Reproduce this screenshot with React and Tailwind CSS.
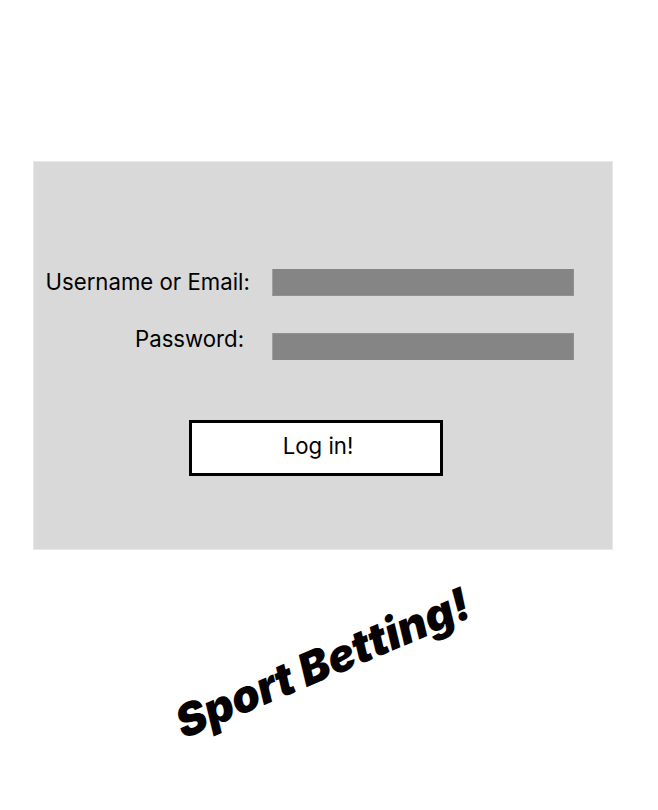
export default function App() {
  return (
    <main className="h-[810px] w-[658px] overflow-hidden bg-white pt-[161px] font-['Inter',sans-serif] text-black">
      <form className="ml-[33px] h-[389px] w-[580px] border border-[#e8e8e8] bg-[#d9d9d9] pt-[107px]">
        <div className="flex h-[27px]">
          <label className="-mt-px ml-[11.5px] w-[226.5px] whitespace-nowrap text-[22.2px] leading-[27px]">Username or Email:</label>
          <div className="h-[27px] w-[302px] border-r border-b border-l border-r-[#909090] border-b-[#909090] border-l-[#a0a0a0] bg-[#858585]" />
        </div>
        <div className="mt-[29px] flex h-[35px]">
          <label className="ml-[101px] w-[137px] whitespace-nowrap text-[22.2px] leading-[27px]">Password:</label>
          <div className="mt-[8px] h-[27px] w-[302px] border-t border-r border-l border-t-[#909090] border-r-[#909090] border-l-[#a0a0a0] bg-[#858585]" />
        </div>
        <button type="button" className="mt-[60px] ml-[155px] block h-[56px] w-[254px] border-[3px] border-black bg-white pb-[5px] pl-[4px] text-[22.2px] leading-[27px]">Log in!</button>
      </form>
      <h1 className="mt-[85.5px] ml-[164.5px] w-fit -rotate-[23deg] text-[45px] leading-[54px] font-black tracking-[-0.05px] text-[#060203] italic whitespace-nowrap [font-kerning:none]">
        Sport Betting!
      </h1>
    </main>
  );
}
